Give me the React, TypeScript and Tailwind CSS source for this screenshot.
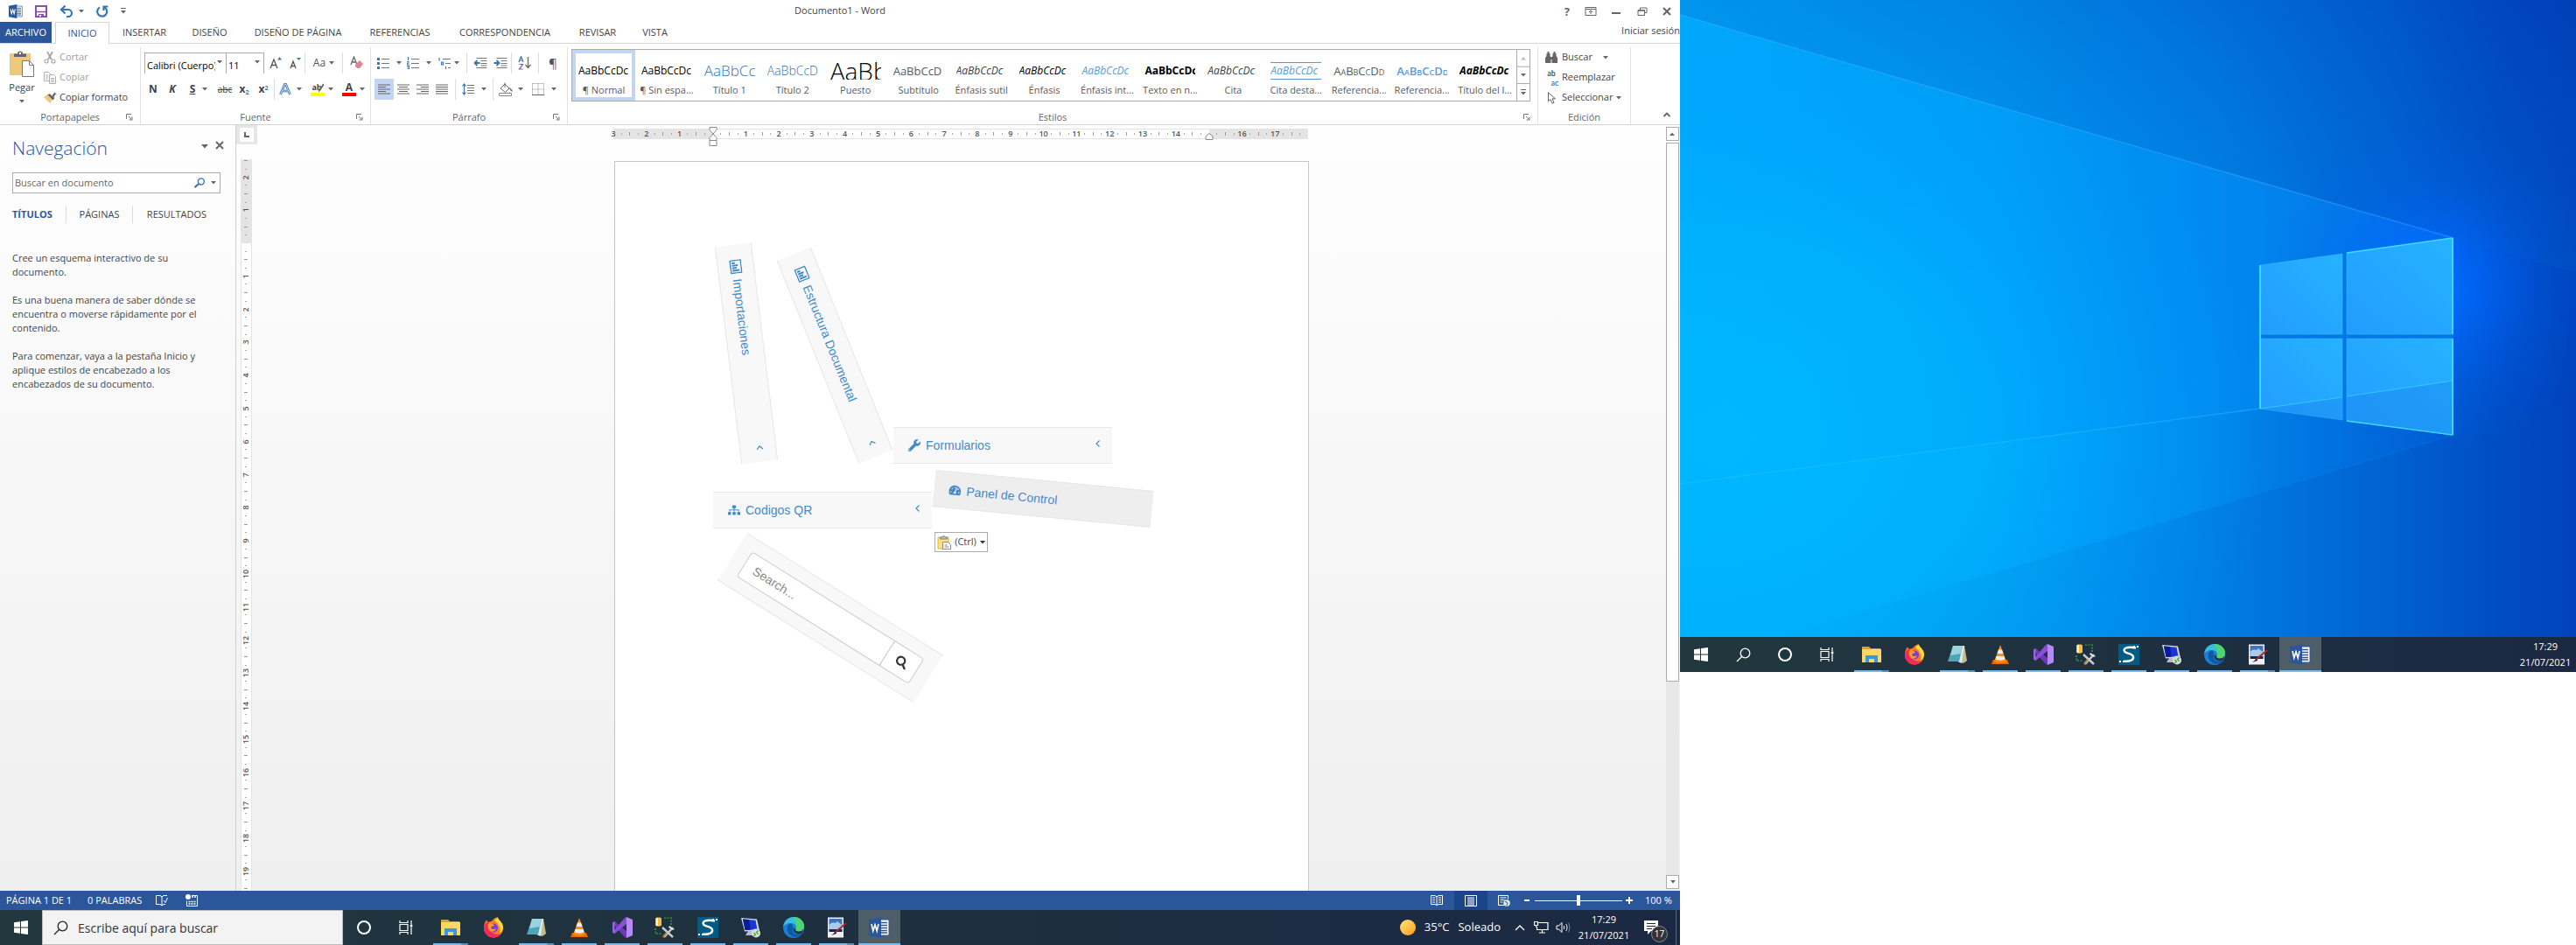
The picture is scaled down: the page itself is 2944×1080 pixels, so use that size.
import React from "react";
import { FaSearch, FaSitemap, FaTachometerAlt, FaWrench } from "react-icons/fa";

const UI = "font-['Open_Sans','Noto_Sans',sans-serif]";

/* ---------- shared bits ---------- */

function Caret({ className = "text-[#666]" }: { className?: string }) {
  return (
    <svg viewBox="0 0 6 4" className={`h-1 w-1.5 shrink-0 ${className}`} fill="currentColor" aria-hidden="true">
      <path d="M0 0h6L3 3.6z" />
    </svg>
  );
}

function Sep() {
  return <span className="h-6 w-px shrink-0 bg-[#dcdcdc]" />;
}

function Tool({ label, className = "", children }: { label: string; className?: string; children: React.ReactNode }) {
  return (
    <button type="button" aria-label={label} className={`flex h-6 shrink-0 items-center justify-center gap-1 ${className}`}>
      {children}
    </button>
  );
}

function Svg({ box = "0 0 16 16", className = "size-4", children }: { box?: string; className?: string; children: React.ReactNode }) {
  return (
    <svg viewBox={box} className={`shrink-0 ${className}`} fill="none" aria-hidden="true">
      {children}
    </svg>
  );
}

/* ---------- title bar ---------- */

function WordGlyph({ className = "size-4" }: { className?: string }) {
  return (
    <Svg box="0 0 24 24" className={className}>
      <path d="M12 3h11v18H12z" fill="#fff" stroke="#2b579a" strokeWidth="1" />
      <path d="M14 6.5h7M14 9.5h7M14 12.5h7M14 15.5h7M14 18h7" stroke="#2b579a" strokeWidth="1.4" />
      <path d="M0 2.8 14 0v24L0 21.2z" fill="#2b579a" />
      <path d="m3 8 1.8 8L7 9l2.2 7L11 8" stroke="#fff" strokeWidth="1.6" />
    </Svg>
  );
}

function TitleBar() {
  return (
    <header className="grid h-[25px] shrink-0 grid-cols-3 items-center text-[#444]">
      <div className="flex items-center pl-2.5">
        <WordGlyph />
        <button type="button" aria-label="Guardar" className="ml-3.5">
          <Svg box="0 0 14 14" className="size-3.5">
            <path d="M1 1h12v12H1z" stroke="#8a4fae" strokeWidth="2" />
            <path d="M2 7.5h10" stroke="#8a4fae" strokeWidth="1.5" />
            <path d="M4 10h6v4H4z" fill="#8a4fae" />
            <path d="M5 11h2v2H5z" fill="#fff" />
          </Svg>
        </button>
        <button type="button" aria-label="Deshacer" className="ml-3.5 flex items-center gap-1.5">
          <Svg box="0 0 16 14" className="h-3.5 w-4">
            <path d="M2 5h8a4 4 0 0 1 0 8H8" stroke="#3a76b4" strokeWidth="2.2" />
            <path d="M6.5 0.500 2 5l4.500 4.500" stroke="#3a76b4" strokeWidth="2.200" />
          </Svg>
          <Caret />
        </button>
        <button type="button" aria-label="Rehacer" className="ml-3.5">
          <Svg box="0 0 14 14" className="size-3.5">
            <path d="M9 2.200A5.500 5.500 0 1 1 4 2.400" stroke="#3a76b4" strokeWidth="2.200" />
            <path d="M8.500 6V1.500H13.500" stroke="#3a76b4" strokeWidth="2.200" />
          </Svg>
        </button>
        <button type="button" aria-label="Personalizar" className="ml-3.5 flex flex-col items-center gap-0.5">
          <span className="h-px w-1.5 bg-[#666]" />
          <Caret />
        </button>
      </div>
      <h1 className="text-center text-[11px]">Documento1 - Word</h1>
      <div className="flex items-center justify-end gap-[17px] pr-2.5 text-[#666]">
        <button type="button" aria-label="Ayuda" className="text-[13px] leading-4 font-bold">?</button>
        <button type="button" aria-label="Opciones de presentación">
          <Svg box="0 0 13 10" className="h-2.5 w-3.5">
            <path d="M.5.5h12v9H.5zM.5 2.500h12M6.500 8V4.500M4.500 6l2-2 2 2" stroke="#666" />
          </Svg>
        </button>
        <button type="button" aria-label="Minimizar" className="flex h-4 w-3 items-center">
          <span className="mt-1 h-0.5 w-2.5 bg-[#666]" />
        </button>
        <button type="button" aria-label="Restaurar">
          <Svg box="0 0 11 10" className="h-2.5 w-3">
            <path d="M3 3V1h7.500v5.500H8M.5 3.500h7.500v6H.5z" stroke="#666" />
            <path d="M.5 4h7.500" stroke="#666" strokeWidth="1.500" />
          </Svg>
        </button>
        <button type="button" aria-label="Cerrar">
          <Svg box="0 0 10 10" className="size-2.5">
            <path d="m1 1 8 8M9 1 1 9" stroke="#666" strokeWidth="2" />
          </Svg>
        </button>
      </div>
    </header>
  );
}

const tabs = [
  ["INSERTAR", "w-20"],
  ["DISEÑO", "w-[69px]"],
  ["DISEÑO DE PÁGINA", "w-[133px]"],
  ["REFERENCIAS", "w-[100px]"],
  ["CORRESPONDENCIA", "w-[140px]"],
  ["REVISAR", "w-[72px]"],
  ["VISTA", "w-[59px]"],
];

function Tabs() {
  return (
    <nav className="flex h-[25px] shrink-0 border-b border-[#d4d4d4] text-[11px] text-[#444]">
      <button type="button" className="w-[59px] bg-[#2b579a] text-white">ARCHIVO</button>
      <button type="button" className="-mb-px ml-1 w-[62px] border border-b-0 border-[#d4d4d4] bg-white text-[#2b579a]">INICIO</button>
      {tabs.map(([t, w]) => (
        <button type="button" key={t} className={`whitespace-nowrap ${w}`}>{t}</button>
      ))}
      <button type="button" className="ml-auto self-start pt-0.5 text-[11px]">Iniciar sesión</button>
    </nav>
  );
}

/* ---------- ribbon ---------- */

function Launcher() {
  return (
    <Svg box="0 0 8 8" className="size-2">
      <path d="M.5 6V.5H6M3 3l3.500 3.500M7 3.500V7H3.500" stroke="#777" />
    </Svg>
  );
}

function Group({ title, launcher = true, className, children }: { title: string; launcher?: boolean; className: string; children: React.ReactNode }) {
  return (
    <section aria-label={title} className={`flex flex-col border-r border-[#e1e1e1] ${className}`}>
      <div className="min-h-0 flex-1">{children}</div>
      <div className="grid h-4 grid-cols-[16px_1fr_16px] items-center text-[11px] leading-4 text-[#666]">
        <span />
        <span className="text-center">{title}</span>
        {launcher && <button type="button" aria-label={`Opciones de ${title}`}><Launcher /></button>}
      </div>
    </section>
  );
}

function Lines({ d }: { d: string }) {
  return (
    <Svg box="0 0 14 12" className="h-3 w-3.5">
      <path d={d} stroke="#666" strokeWidth="1.200" />
    </Svg>
  );
}

function Clipboard() {
  return (
    <Group title="Portapapeles" className="w-[161px]">
      <div className="flex">
        <button type="button" className="flex w-[50px] flex-col items-center pt-1 text-[11px] text-[#444]">
          <Svg box="0 0 28 30" className="h-[30px] w-7">
            <path d="M0 3h24v25H0z" fill="#edc87e" />
            <path d="M5 7V3.500h4a3 3 0 0 1 6 0h4V7z" fill="#666" />
            <circle cx="12" cy="3" r="1.200" fill="#fff" />
            <path d="M14.500 11.500h8l5 5v13h-13z" fill="#fff" stroke="#777" />
            <path d="M22.500 11.500v5h5" stroke="#777" />
          </Svg>
          <span className="mt-1 leading-4">Pegar</span>
          <Caret className="mt-1.5 text-[#666]" />
        </button>
        <div className="flex flex-col text-[11px] text-[#444]">
          <button type="button" className="flex h-[23px] items-center gap-1 text-[#a0a0a0]">
            <Svg box="0 0 14 14" className="size-3.5">
              <path d="M4 0l5 9M10 0 5 9" stroke="#a6a6a6" strokeWidth="1.800" />
              <circle cx="3" cy="11" r="2" stroke="#a6a6a6" strokeWidth="1.200" />
              <circle cx="11" cy="11" r="2" stroke="#a6a6a6" strokeWidth="1.200" />
            </Svg>
            Cortar
          </button>
          <button type="button" className="flex h-[23px] items-center gap-1 text-[#a0a0a0]">
            <Svg box="0 0 14 14" className="size-3.5">
              <path d="M.5.5h5l2 2v8H.5zM2 4h3M2 6h3M2 8h3" stroke="#b0b0b0" />
              <path d="M6.500 3.500h5l2 2v8h-7z" fill="#fff" stroke="#b0b0b0" />
              <path d="M8 7.500h4M8 9.500h4M8 11.500h4" stroke="#b0b0b0" />
            </Svg>
            Copiar
          </button>
          <button type="button" className="flex h-[23px] items-center gap-1 whitespace-nowrap">
            <Svg box="0 0 14 14" className="size-3.5">
              <path d="M0 6l4-3 6 6-3 4z" fill="#edc87e" />
              <path d="M4.500 3.500 6.500 2l6 5-2 2.500z" fill="#666" />
              <path d="m9.500 4.500 3-4L14 2l-2.500 4z" fill="#666" />
            </Svg>
            Copiar formato
          </button>
        </div>
      </div>
    </Group>
  );
}

function Combo({ label, value, className }: { label: string; value: string; className: string }) {
  return (
    <label className={`relative block h-6 shrink-0 border border-[#ababab] ${className}`}>
      <span className="sr-only">{label}</span>
      <select defaultValue={value} className="h-full w-full appearance-none overflow-hidden bg-white pr-3 pl-0.5 text-[11px] text-black">
        <option>{value}</option>
      </select>
      <span className="pointer-events-none absolute top-2 right-1 flex"><Caret /></span>
    </label>
  );
}

function FontGroup() {
  return (
    <Group title="Fuente" className="w-[263px]">
      <div className="flex items-center pt-1.5 pl-1">
        <Combo label="Fuente" value="Calibri (Cuerpo)" className="w-[94px]" />
        <Combo label="Tamaño" value="11" className="-ml-px w-11" />
        <Tool label="Aumentar" className="w-[25px]">
          <Svg box="0 0 14 14" className="size-3.5">
            <path d="m1 13 4-10 4 10M2.500 9.500h5" stroke="#555" strokeWidth="1.300" />
            <path d="M9 3.500 11.500 0 14 3.500z" fill="#3a76b4" />
          </Svg>
        </Tool>
        <Tool label="Reducir" className="w-[21px]">
          <Svg box="0 0 14 14" className="size-3.5">
            <path d="m1 13 3-8 3 8M2 10.500h4" stroke="#555" strokeWidth="1.300" />
            <path d="M8 1h5l-2.500 3z" fill="#3a76b4" />
          </Svg>
        </Tool>
        <Sep />
        <Tool label="Cambiar mayúsculas" className="w-[42px] text-[12px] text-[#555]">Aa<Caret /></Tool>
        <Sep />
        <Tool label="Borrar formato" className="w-8">
          <Svg>
            <path d="m1 10 3.500-9L8 10M2.500 7h4" stroke="#666" strokeWidth="1.300" />
            <path d="m6 10 5-5 4 4-4 5H8.500L6 12z" fill="#e57f92" />
          </Svg>
        </Tool>
      </div>
      <div className="flex items-center pt-1.5 pl-1 text-[12px] text-[#444]">
        <Tool label="Negrita" className="w-5 font-bold">N</Tool>
        <Tool label="Cursiva" className="w-6 font-bold italic">K</Tool>
        <Tool label="Subrayado" className="w-9 gap-2 font-bold"><u>S</u><Caret /></Tool>
        <Tool label="Tachado" className="w-6 text-[10px]"><s>abc</s></Tool>
        <Tool label="Subíndice" className="w-5 font-bold"><span>x<sub className="text-[7px] text-[#3a76b4]">2</sub></span></Tool>
        <Tool label="Superíndice" className="w-6 font-bold"><span>x<sup className="text-[7px] text-[#3a76b4]">2</sup></span></Tool>
        <Sep />
        <Tool label="Efectos de texto" className="w-9 gap-1.5">
          <Svg box="0 0 14 14" className="size-3.5">
            <path d="m1.500 13 5-12h1l5 12M3.500 9h7" stroke="#a8c8e8" strokeWidth="3.400" />
            <path d="m1.500 13 5-12h1l5 12M3.500 9h7" stroke="#2f6cab" strokeWidth="2" />
            <path d="m1.500 13 5-12h1l5 12M3.500 9h7" stroke="#fff" strokeWidth=".8" />
          </Svg>
          <Caret />
        </Tool>
        <Tool label="Resaltado" className="w-9">
          <span className="flex flex-col items-center">
            <span className="flex h-3 items-center text-[9px] font-bold">
              ab
              <Svg box="0 0 6 10" className="-ml-1 h-2.5 w-1.5"><path d="M6 1 2 7 0 9.500" stroke="#666" strokeWidth="2" /></Svg>
            </span>
            <span className="h-1 w-4 bg-[#ffff00]" />
          </span>
          <Caret />
        </Tool>
        <Tool label="Color de fuente" className="w-9">
          <span className="flex flex-col items-center">
            <span className="h-3 text-[12px] leading-3 font-bold">A</span>
            <span className="h-1 w-4 bg-[#ff0000]" />
          </span>
          <Caret />
        </Tool>
      </div>
    </Group>
  );
}

function ListIcon({ kind }: { kind: "dot" | "num" | "multi" }) {
  return (
    <Svg box="0 0 14 14" className="size-3.5">
      {kind === "multi" ? (
        <>
          <path d="M5 2.500h9M8 7.500h6M11 12.500h3" stroke="#777" strokeWidth="1.200" />
          <path d="M1 1v3.500M3.500 6v3h2V6zM8.500 11v3" stroke="#3a76b4" strokeWidth="1.200" />
        </>
      ) : (
        <>
          <path d="M5 2.500h9M5 7.500h9M5 12.500h9" stroke="#777" strokeWidth="1.200" />
          {kind === "dot" ? (
            <path d="M0 1h3v3H0zM0 6h3v3H0zM0 11h3v3H0z" fill="#3a76b4" />
          ) : (
            <path d="M1.500 0v4M0 5.500h2v1.700H.5v1.800H3M0 10.500h2.500v3.500H0M.5 12.200h2" stroke="#3a76b4" />
          )}
        </>
      )}
    </Svg>
  );
}

function IndentIcon({ flip = false }: { flip?: boolean }) {
  return (
    <Svg box="0 0 15 12" className="h-3 w-4">
      <path d="M3 .5h12M8 3.500h7M8 6.500h7M8 9h7M3 11.500h12" stroke="#777" />
      <path d={flip ? "M0 6h5M3 3l3 3-3 3" : "M7 6H1M4 3 1 6l3 3"} stroke="#3a76b4" strokeWidth="1.800" />
    </Svg>
  );
}

function ParagraphGroup() {
  return (
    <Group title="Párrafo" className="w-[225px]">
      <div className="flex items-center pt-1.5 pl-1">
        <Tool label="Viñetas" className="w-[34px] gap-2"><ListIcon kind="dot" /><Caret /></Tool>
        <Tool label="Numeración" className="w-[34px] gap-2"><ListIcon kind="num" /><Caret /></Tool>
        <Tool label="Lista multinivel" className="w-[34px]"><ListIcon kind="multi" /><Caret /></Tool>
        <span className="w-1" />
        <Sep />
        <Tool label="Disminuir sangría" className="ml-1 w-[22px]"><IndentIcon /></Tool>
        <Tool label="Aumentar sangría" className="w-6"><IndentIcon flip /></Tool>
        <Sep />
        <Tool label="Ordenar" className="w-[30px]">
          <Svg>
            <path d="m1 7 2.500-6.500L6 7M2 5h3" stroke="#3a76b4" strokeWidth="1.200" />
            <path d="M1.500 9.500h4l-4 5.500h4" stroke="#8a4fae" strokeWidth="1.200" />
            <path d="M11.500 1v12M8.500 10l3 3.500 3-3.500" stroke="#666" strokeWidth="1.300" />
          </Svg>
        </Tool>
        <Sep />
        <Tool label="Mostrar todo" className="w-8 text-[15px] text-[#555]">¶</Tool>
      </div>
      <div className="flex items-center pt-1.5 pl-1">
        <Tool label="Izquierda" className="w-[22px] bg-[#c2d5f2]"><Lines d="M0 1h14M0 3.500h9M0 6h14M0 8.500h9M0 11h14" /></Tool>
        <Tool label="Centrar" className="w-[22px]"><Lines d="M0 1h14M2 3.500h10M0 6h14M2 8.500h10M0 11h14" /></Tool>
        <Tool label="Derecha" className="w-[22px]"><Lines d="M0 1h14M5 3.500h9M0 6h14M5 8.500h9M0 11h14" /></Tool>
        <Tool label="Justificar" className="w-[22px]"><Lines d="M0 1h14M0 3.500h14M0 6h14M0 8.500h14M0 11h14" /></Tool>
        <span className="w-1" />
        <Sep />
        <Tool label="Espaciado" className="w-[42px] gap-2">
          <Svg box="0 0 14 14" className="size-3.5">
            <path d="M6 2.500h8M6 5.500h8M6 8.500h8M6 11.500h8" stroke="#777" />
            <path d="M2.500 1v12M.5 3.500l2-2.500 2 2.500M.5 10.500l2 2.500 2-2.500" stroke="#3a76b4" strokeWidth="1.200" />
          </Svg>
          <Caret />
        </Tool>
        <Sep />
        <Tool label="Sombreado" className="w-10 gap-1.5">
          <Svg>
            <path d="m2 7 5-5 5 5-4.500 4.500zM7 6V.5" stroke="#666" />
            <path d="M12 5.500 15.500 9v2L13 9z" fill="#3a76b4" />
            <path d="M.5 12.500h14v3H.5z" fill="#fff" stroke="#888" />
          </Svg>
          <Caret />
        </Tool>
        <Tool label="Bordes" className="w-9 gap-2">
          <Svg box="0 0 14 14" className="size-3.5">
            <path d="M.5.5h13v13M.5.5v13M7 .5v13M.5 7h13" stroke="#888" strokeDasharray="1 1" />
            <path d="M0 13.500h14" stroke="#666" />
          </Svg>
          <Caret />
        </Tool>
      </div>
    </Group>
  );
}

const styles: [string, string, string][] = [
  ["¶ Normal", "AaBbCcDc", "text-[12px] text-black"],
  ["¶ Sin espa...", "AaBbCcDc", "text-[12px] text-black"],
  ["Título 1", "AaBbCc", "text-[17px] font-light text-[#2e74b5]"],
  ["Título 2", "AaBbCcD", "text-[14px] font-light text-[#2e74b5]"],
  ["Puesto", "AaBb", "text-[28px] font-light text-black"],
  ["Subtítulo", "AaBbCcD", "text-[13px] text-[#5a5a5a]"],
  ["Énfasis sutil", "AaBbCcDc", "text-[12px] italic text-[#404040]"],
  ["Énfasis", "AaBbCcDc", "text-[12px] italic text-black"],
  ["Énfasis int...", "AaBbCcDc", "text-[12px] italic text-[#5b9bd5]"],
  ["Texto en n...", "AaBbCcDc", "text-[12px] font-bold text-black"],
  ["Cita", "AaBbCcDc", "text-[12px] italic text-[#404040]"],
  ["Cita desta...", "AaBbCcDc", "text-[12px] border-y border-[#5b9bd5] italic text-[#5b9bd5]"],
  ["Referencia...", "AaBbCcDd", "text-[13px] text-[#5a5a5a] [font-variant:small-caps]"],
  ["Referencia...", "AaBbCcDd", "text-[13px] font-semibold text-[#5b9bd5] [font-variant:small-caps]"],
  ["Título del l...", "AaBbCcDc", "text-[12px] font-bold italic text-black"],
];

function StylesGroup() {
  return (
    <Group title="Estilos" className="min-w-0 flex-1">
      <div className="mt-0.5 mr-2 ml-1 flex h-[60px] border border-[#ababab]">
        {styles.map(([name, sample, cls], i) => (
          <button
            type="button"
            key={i}
            className={`flex min-w-0 flex-1 flex-col items-center justify-end gap-1 border-4 ${i === 0 ? "border-[#c2d5f2]" : "border-transparent"}`}
          >
            <span className={`flex h-5 w-[58px] items-center overflow-hidden leading-5 whitespace-nowrap ${cls}`}>{sample}</span>
            <span className="text-[11px] leading-4 whitespace-nowrap text-[#5a5a5a]">{name}</span>
          </button>
        ))}
        <div className="flex w-[15px] flex-col border-l border-[#ababab]">
          <button type="button" aria-label="Subir" className="flex flex-1 rotate-180 items-center justify-center border-t border-[#ababab]"><Caret className="text-[#bbb]" /></button>
          <button type="button" aria-label="Bajar" className="flex flex-1 items-center justify-center border-b border-[#ababab]"><Caret /></button>
          <button type="button" aria-label="Más" className="flex flex-1 flex-col items-center justify-center gap-0.5"><span className="h-px w-1.5 bg-[#666]" /><Caret /></button>
        </div>
      </div>
    </Group>
  );
}

function EditGroup() {
  return (
    <Group title="Edición" launcher={false} className="w-[106px]">
      <div className="flex flex-col pl-[7px] text-[11px] text-[#444]">
        <button type="button" className="flex h-[23px] items-center gap-1">
          <Svg box="0 0 15 14" className="h-3.5 w-4">
            <path d="M2 2h4v3l1 2v6H.5V7L2 5zM9 2h4v3l1.500 2v6H8V7l1-2zM3 0h2v2H3zM10 0h2v2h-2zM6.500 6h2v3h-2z" fill="#666" />
          </Svg>
          Buscar<Caret className="ml-2 text-[#666]" />
        </button>
        <button type="button" className="flex h-[23px] items-center gap-1">
          <span className="flex w-4 flex-col text-[8px] leading-[11px] font-semibold">
            <span>ab</span>
            <span className="text-right text-[#3a76b4]">ac</span>
          </span>
          Reemplazar
        </button>
        <button type="button" className="flex h-[23px] items-center gap-1 whitespace-nowrap">
          <Svg box="0 0 16 14" className="h-3.5 w-4">
            <path d="M4.500.8v10l2.500-2.300 2 4.700 2-.9-2-4.500h3.500z" fill="#fff" stroke="#666" />
          </Svg>
          Seleccionar<Caret />
        </button>
      </div>
    </Group>
  );
}

function Ribbon() {
  return (
    <div className="h-[93px] shrink-0 border-b border-[#d4d4d4]">
      <div className="flex h-[92px] pt-1">
        <Clipboard />
        <FontGroup />
        <ParagraphGroup />
        <StylesGroup />
        <EditGroup />
        <div className="flex w-14 items-end justify-end pr-2.5 pb-1">
          <button type="button" aria-label="Contraer la cinta">
            <Svg box="0 0 9 6" className="mb-1 h-1.5 w-2.5"><path d="m1 5 3.500-3.500L8 5" stroke="#666" strokeWidth="1.800" /></Svg>
          </button>
        </div>
      </div>
    </div>
  );
}

/* ---------- navigation pane ---------- */

function NavPane() {
  return (
    <aside className="w-[270px] shrink-0 border-r border-[#d0d0d0] pt-3 pr-[17px] pl-3.5 text-[#444]">
      <div className="flex items-start">
        <h2 className="flex-1 text-[21px] leading-7 font-light text-[#2b579a]">Navegación</h2>
        <button type="button" aria-label="Opciones del panel" className="mt-2.5 mr-2">
          <Svg box="0 0 8 5" className="h-[5px] w-2"><path d="M0 0h8L4 4.500z" fill="#666" /></Svg>
        </button>
        <button type="button" aria-label="Cerrar panel" className="mt-1.5 -mr-1">
          <Svg box="0 0 10 10" className="size-2.5"><path d="m1 1 8 8M9 1 1 9" stroke="#666" strokeWidth="2" /></Svg>
        </button>
      </div>
      <div className="mt-3.5 flex h-6 items-center border border-[#ababab] bg-white pr-1">
        <input aria-label="Buscar en documento" placeholder="Buscar en documento" className="min-w-0 flex-1 pl-0.5 text-[11px] outline-none placeholder:text-[#666]" />
        <Svg box="0 0 14 13" className="h-3 w-3.5">
          <circle cx="9" cy="4.800" r="3.800" stroke="#3a76b4" strokeWidth="1.500" />
          <path d="M6.200 7.600 1 12" stroke="#3a76b4" strokeWidth="2.400" />
        </Svg>
        <span className="w-1.5" />
        <Caret />
      </div>
      <div className="mt-3.5 flex h-5 items-center text-[11px]">
        <button type="button" className="w-[61px] text-left font-bold text-[#2b579a]">TÍTULOS</button>
        <span className="h-5 w-px bg-[#dcdcdc]" />
        <button type="button" className="w-[75px]">PÁGINAS</button>
        <span className="h-5 w-px bg-[#dcdcdc]" />
        <button type="button" className="w-[100px] shrink-0">RESULTADOS</button>
      </div>
      <div className="mt-8 space-y-4 text-[11px] leading-4">
        <p>Cree un esquema interactivo de su documento.</p>
        <p>Es una buena manera de saber dónde se encuentra o moverse rápidamente por el contenido.</p>
        <p>Para comenzar, vaya a la pestaña Inicio y aplique estilos de encabezado a los encabezados de su documento.</p>
      </div>
    </aside>
  );
}

/* ---------- rulers ---------- */

const hidden = [0, 15];

function HCell({ n }: { n: number }) {
  return (
    <div className="flex min-w-0 flex-1 items-center justify-between">
      <span className="flex w-0 justify-center text-[9px] leading-3 font-semibold text-[#555]">{hidden.includes(n) ? "" : Math.abs(n)}</span>
      <span className="h-0.5 w-px bg-[#aaa]" />
      <span className="h-1 w-px bg-[#999]" />
      <span className="h-0.5 w-px bg-[#aaa]" />
      <span className="w-0" />
    </div>
  );
}

function VCell({ n }: { n: number }) {
  return (
    <div className="flex min-h-0 flex-1 flex-col items-center justify-between">
      <span className="flex h-0 items-center">
        <span className="-rotate-90 text-[9px] leading-3 font-semibold text-[#555]">{n === 0 ? "" : Math.abs(n)}</span>
      </span>
      <span className="h-px w-0.5 bg-[#aaa]" />
      <span className="h-px w-1 bg-[#999]" />
      <span className="h-px w-0.5 bg-[#aaa]" />
      <span className="h-0" />
    </div>
  );
}

const range = (from: number, to: number) => Array.from({ length: to - from + 1 }, (_, i) => from + i);

function HRuler() {
  return (
    <div className="relative flex h-3 w-[794px]">
      <div className="flex flex-[3] bg-[#e4e4e4]">{range(-3, -1).map((n) => <HCell key={n} n={n} />)}</div>
      <div className="flex flex-[15] border-y border-[#e4e4e4] bg-white">{range(0, 14).map((n) => <HCell key={n} n={n} />)}</div>
      <div className="flex flex-[3] bg-[#e4e4e4]">{range(15, 17).map((n) => <HCell key={n} n={n} />)}</div>
      <svg viewBox="0 0 10 22" className="absolute -top-0.5 left-[109px] h-[22px] w-2.5" fill="#fff" stroke="#888" aria-hidden="true">
        <path d="M1 .5h8v3L5 8 1 3.500zM1 15.500v-3L5 8l4 4.500v3zM1 15.500h8v6H1z" />
      </svg>
      <svg viewBox="0 0 10 10" className="absolute top-1 right-[108px] h-2.5 w-2.5" fill="#fff" stroke="#888" aria-hidden="true">
        <path d="M1 8.500v-3.500L5 1.500 9 5v3.500z" />
      </svg>
    </div>
  );
}

/* ---------- document canvas ---------- */

function FramedBars() {
  return (
    <svg viewBox="0 0 16 14" className="h-3.5 w-4" fill="none" aria-hidden="true">
      <path d="M.8.800h14.400v12.200H.8z" stroke="#428bca" strokeWidth="1.400" />
      <path d="M3.800 7.500V11.200M6.600 4.500V11.200M9.400 6V11.200M12.200 3V11.200" stroke="#428bca" strokeWidth="2" />
    </svg>
  );
}

function MenuCard({ icon, text, arrow = true, className }: { icon: React.ReactNode; text: string; arrow?: boolean; className: string }) {
  return (
    <a href="#" className={`absolute flex h-[42px] w-[250px] items-center gap-1.5 border-y border-[#e7e7e7] pr-3.5 pl-[17px] font-['Liberation_Sans',Arial,sans-serif] text-[14px] text-[#428bca] ${className}`}>
      {icon}
      <span className="flex-1 whitespace-nowrap">{text}</span>
      {arrow && (
        <svg viewBox="0 0 5 8" className="mb-1 h-2 w-[5px]" fill="none" stroke="#428bca" strokeWidth="1.200" aria-hidden="true">
          <path d="M4.500.5 1 4l3.500 3.500" />
        </svg>
      )}
    </a>
  );
}

function Page() {
  return (
    <div className="relative h-full w-[794px] border border-b-0 border-[#c6c6c6] bg-white">
      <MenuCard icon={<FramedBars />} text="Importaciones" className="top-[198px] left-[25px] rotate-[83deg] bg-[#f8f8f8]" />
      <MenuCard icon={<FramedBars />} text="Estructura Documental" className="top-[200px] left-[126px] rotate-[68deg] bg-[#f8f8f8]" />
      <MenuCard icon={<FaWrench className="size-3.5" />} text="Formularios" className="top-[303px] left-[318px] bg-[#f8f8f8]" />
      <MenuCard icon={<FaSitemap className="size-3.5" />} text="Codigos QR" className="top-[377px] left-[112px] bg-[#f8f8f8]" />
      <MenuCard icon={<FaTachometerAlt className="size-3.5" />} text="Panel de Control" arrow={false} className="top-[364px] left-[364px] rotate-[5.5deg] bg-[#eee]" />
      <form className="absolute top-[489px] left-[114px] flex h-16 w-[264px] rotate-[32deg] items-center border-y border-[#e7e7e7] bg-[#f8f8f8] px-4">
        <input aria-label="Search" placeholder="Search..." className="h-[34px] min-w-0 flex-1 rounded-l border border-[#ccc] bg-white px-3 font-['Liberation_Sans',Arial,sans-serif] text-[14px] placeholder:text-[#888]" />
        <button type="button" aria-label="Buscar" className="-ml-px flex h-[34px] w-10 items-center justify-center rounded-r border border-[#ccc] bg-white">
          <FaSearch className="size-3.5 -rotate-[10deg] text-[#333]" />
        </button>
      </form>
      <button type="button" className="absolute top-[423px] left-[365px] flex h-[23px] w-[61px] items-center justify-center gap-1 border border-[#ababab] bg-white text-[11px] text-[#444]">
        <Svg>
          <path d="M1 2h12v13H1z" fill="#ffe27a" stroke="#d9b740" />
          <path d="M3.500 4V2H6a1.500 1.500 0 0 1 3 0h2.500v2z" fill="#bbb" stroke="#888" />
          <path d="M6.500 7.500h6l3 3v5h-9z" fill="#fff" stroke="#888" />
          <path d="M8.500 11h3M8.500 13h5" stroke="#888" />
        </Svg>
        (Ctrl)<Caret className="text-[#333]" />
      </button>
    </div>
  );
}

function DocumentArea() {
  return (
    <main className="grid min-h-0 min-w-0 flex-1 grid-cols-[24px_1fr_16px] grid-rows-[22px_minmax(0,1fr)]">
      <div className="flex items-center justify-center bg-[#e6e6e6]">
        <div className="flex size-4 items-center justify-center bg-white">
          <span className="size-1.5 border-b-2 border-l-2 border-[#666]" />
        </div>
      </div>
      <div className="flex justify-center pt-1 pr-0.5"><HRuler /></div>
      <div className="row-span-2 flex flex-col pt-0.5 pr-px">
        <button type="button" aria-label="Desplazar arriba" className="flex h-4 shrink-0 rotate-180 items-center justify-center border border-[#ababab] bg-white"><Caret /></button>
        <div className="mt-0.5 flex min-h-0 flex-1 flex-col bg-[#e8e8e8] pb-1"><div className="h-[74%] border border-[#ababab] bg-white" /></div>
        <button type="button" aria-label="Desplazar abajo" className="mb-0.5 flex h-4 shrink-0 items-center justify-center border border-[#ababab] bg-white"><Caret /></button>
      </div>
      <div className="flex min-h-0 flex-col items-center overflow-hidden pt-[17px] pr-0.5">
        <div className="flex h-24 w-[13px] shrink-0 flex-col justify-end overflow-hidden bg-[#e4e4e4]">
          <div className="flex h-[113px] shrink-0 flex-col">{range(-3, -1).map((n) => <VCell key={n} n={n} />)}</div>
        </div>
        <div className="flex h-[756px] w-[13px] shrink-0 flex-col border-x border-[#e4e4e4] bg-white">{range(0, 19).map((n) => <VCell key={n} n={n} />)}</div>
      </div>
      <div className="flex min-h-0 justify-center overflow-hidden pt-[19px]"><Page /></div>
    </main>
  );
}

/* ---------- status bar ---------- */

function StatusBar() {
  return (
    <footer className="flex h-[22px] shrink-0 items-center bg-[#2b579a] text-[11px] text-white">
      <span className="w-[92px] pl-[7px] whitespace-nowrap">PÁGINA 1 DE 1</span>
      <span className="pl-2">0 PALABRAS</span>
      <button type="button" aria-label="Revisión" className="ml-4">
        <Svg box="0 0 14 14" className="size-3.5">
          <path d="M7 3v10L5 11.500H.5V1.500H5zM7 3l2-1.500h4M7 13l2-1.500h2M9 7l2 2.500L13.500 4" stroke="#fff" />
        </Svg>
      </button>
      <button type="button" aria-label="Macro" className="ml-5">
        <Svg box="0 0 14 14" className="size-3.5">
          <circle cx="3" cy="3" r="3" fill="#fff" />
          <path d="M7 1.500h6.500v12H1.500V7.500" stroke="#fff" />
          <path d="M7 3h6M3.500 8.500h8M3.500 11h8" stroke="#fff" strokeWidth="1.500" strokeDasharray="2 1" />
        </Svg>
      </button>
      <div className="ml-auto flex h-full items-center">
        <button type="button" aria-label="Modo de lectura" className="mr-[13px]">
          <Svg box="0 0 14 12" className="h-3 w-3.5">
            <path d="M7 2v9.500L5 10.500H.5v-10H5zM7 2l2-1.500h4.500v10H9l-2 1M2 3h3M2 5.500h3M2 8h3M9 3h3M9 5.500h3M9 8h3" stroke="#fff" />
          </Svg>
        </button>
        <button type="button" aria-label="Diseño de impresión" className="flex h-full w-[38px] items-center justify-center bg-[#1c4587]">
          <Svg box="0 0 14 13" className="h-[13px] w-3.5">
            <path d="M.5.5h13v12H.5zM3 3h8M3 5h8M3 7h8M3 9h8M3 11h8" stroke="#fff" />
          </Svg>
        </button>
        <button type="button" aria-label="Diseño web" className="ml-3">
          <Svg box="0 0 14 13" className="h-[13px] w-3.5">
            <path d="M7 11.500H.5V.5h11v4M2.500 3h7M2.500 5.500h5M2.500 8h3" stroke="#fff" />
            <circle cx="10" cy="9" r="3.800" fill="#dfe8f5" />
            <path d="M8 7.500l2 .5 1 2-1.500 2" stroke="#2b579a" />
          </Svg>
        </button>
        <button type="button" aria-label="Alejar" className="ml-4 flex h-4 w-2 items-center"><span className="h-0.5 w-1.5 bg-white" /></button>
        <label className="relative ml-1 flex h-3 w-[100px] items-center">
          <span className="sr-only">Zoom</span>
          <input type="range" defaultValue={50} className="absolute inset-0 m-0 h-3 w-full appearance-none opacity-0" />
          <span className="h-px w-full bg-white" />
          <span className="absolute left-1/2 h-3 w-1 -translate-x-1/2 bg-white" />
        </label>
        <button type="button" aria-label="Acercar" className="ml-1">
          <Svg box="0 0 8 8" className="size-2"><path d="M4 0v8M0 4h8" stroke="#fff" strokeWidth="2" /></Svg>
        </button>
        <span className="w-[54px] pl-3.5 whitespace-nowrap">100 %</span>
      </div>
    </footer>
  );
}

/* ---------- taskbar ---------- */

const art: Record<string, React.ReactNode> = {
  Explorador: (
    <>
      <path d="M1 3h8l2 2h11v15H1z" fill="#e0a11b" />
      <path d="M1 6h22v15H1z" fill="#fcd668" />
      <path d="M5 13h14v8h-4v-4H9v4H5z" fill="#3c96dc" />
    </>
  ),
  Firefox: (
    <>
      <path d="M12 2.500c3-2.500 4-2 5-2 0 3 6 5 6 12A11 11 0 0 1 1 12.500C1 8 2.500 5.500 4 3.500l2 2.500c2-1 4-.5 6-3.500z" fill="#ff7a1a" />
      <path d="M1 12.500a11 11 0 0 0 20 6c-4 3-11 1-12-4-2-4-1-6-4-9-2 2-4 4-4 7z" fill="#f5285e" />
      <path d="M13 4c3-3 3-3 4-3.500 0 3 6 5 6 12-1 4-2 5-4 6 2-5-1-11-6-14.500z" fill="#ffd93c" />
      <circle cx="12" cy="12.500" r="5" fill="#7a3ddb" />
      <path d="M6 8c3-1 5 0 7 1-1 2-3 1-4 3 1 3 4 2 6 1-1 4-6 5-8 2-1-2-2-4-1-7z" fill="#ff9a26" />
    </>
  ),
  Notas: (
    <>
      <path d="M7 2h13l3 17-4 3-5-2z" fill="#c7b98a" />
      <path d="M7 2h13l-3 20-5-2z" fill="#dfe9ea" />
      <path d="M7 2h11l-4 18H1z" fill="#4fa5b8" />
      <path d="M7 2h11l-2 9-12 2z" fill="#9ad4e0" />
    </>
  ),
  VLC: (
    <>
      <path d="M4 18h16l2 5H2z" fill="#e66a00" />
      <path d="m12 1 7 19c-4 2-10 2-14 0z" fill="#ff8a12" />
      <path d="m10 6.500 4 0 1.500 4c-2 1-5 1-7 0zM7.500 14h9l1 3.500c-3 1.500-8 1.500-11 0z" fill="#eee" />
    </>
  ),
  "Visual Studio": (
    <>
      <path d="m17 0 7 3v18l-7 3z" fill="#b58af2" />
      <path d="M1 6.500 3.500 5 17 16V24L15 23 1.500 8z" fill="#7038b8" />
      <path d="M17 0v8L3.500 19 1 17.500 15 1z" fill="#8a4fd6" />
      <path d="M1 6.500 3.500 5v14L1 17.500z" fill="#9a63e0" />
    </>
  ),
  "SQL Server": (
    <>
      <path d="M1 1.500c0-1.500 7-1.500 7 0v8c0 1.500-7 1.500-7 0z" fill="#f0c040" />
      <path d="M3 1v9" stroke="#fff3b8" strokeWidth="2" />
      <path d="M11 1h8v8M1 13v6h7" stroke="#52b043" strokeWidth="1.200" strokeDasharray="2 1.500" fill="none" />
      <path d="m9 12 12 11M21 12 11 23" stroke="#c8ccd0" strokeWidth="2.400" />
      <path d="m14 18-4 5" stroke="#b58a4a" strokeWidth="2.400" />
      <path d="m17 10 6 4-2 1-5-3z" fill="#dde2e6" />
    </>
  ),
  Sage: (
    <>
      <path d="M0 0h24v24H0z" fill="#005c84" />
      <path d="M20 4.500C10 2.500 5 5 7 8.500c2 3 9 2 10 6 1 4-5 6-11 5" stroke="#fff" strokeWidth="2.400" fill="none" />
      <path d="M17 3h2M21 3h2M1 20h2M5 20h2" stroke="#fff" strokeWidth="1.800" />
    </>
  ),
  "Escritorio remoto": (
    <>
      <path d="M1 1 19 2.500l3 13-17 1z" fill="#d6dae2" />
      <path d="m3 2.500 14.500 1.200 2 10.500L5.500 15z" fill="#1836d8" />
      <path d="m3 2.500 7 .600 1.500 11.600-6 .300z" fill="#0a1a9a" />
      <path d="m9 16 5 0 1 5H6z" fill="#b7bcc6" />
      <circle cx="18" cy="18.500" r="5" fill="#d9e0d6" />
      <path d="m15.500 18 2 2-2 2M20.500 15.500l-2 2 2 2" stroke="#3a9a3a" strokeWidth="1.200" fill="none" />
    </>
  ),
  Edge: (
    <>
      <circle cx="12" cy="12" r="12" fill="#1b7fd4" />
      <path d="M0 12C1 4 6 0 12 0c7 0 12 5 12 10.500 0 4-3 6-6.500 6-3 0-4-1.500-3-3 1.500-3-1-6.500-5.500-6.500S1 8.500 0 12z" fill="#37bfe0" />
      <path d="M12 0c7 0 12 5 12 10.500 0 4-3 6-6.500 6-3 0-4-1.500-3-3C17 9 14 4 12 0z" fill="#4fd66b" />
      <path d="M9 7.500c-5 0-6 9-1 13 5 4 12 2 14-1.500-6 3-13-1-11-6 1-2-1-5-2-5.500z" fill="#0c59a4" />
      <path d="M14.500 13.500c-1 1.500 0 3 3 3 2 0 4-.6 5.200-2l-1 4C17 21 11 18 11.500 13z" fill="#21343e" />
    </>
  ),
  Paint: (
    <>
      <path d="M2 .5h18v23H2z" fill="#f1f1f1" />
      <path d="M3.500 2h15v12h-15z" fill="#3d76bd" />
      <path d="M3.500 9c4-5 7 0 9-4l6 4v5h-15z" fill="#a9cbe8" />
      <path d="M3.500 14h15v3h-15z" fill="#142a52" />
      <path d="M23 7 10 18" stroke="#b32025" strokeWidth="2" />
      <path d="m11 17-5 4 6-2z" fill="#222" />
    </>
  ),
};

const apps: [string, "none" | "one" | "many"][] = [
  ["Explorador", "many"],
  ["Firefox", "none"],
  ["Notas", "many"],
  ["VLC", "one"],
  ["Visual Studio", "one"],
  ["SQL Server", "one"],
  ["Sage", "one"],
  ["Escritorio remoto", "one"],
  ["Edge", "one"],
  ["Paint", "many"],
];

function Magnifier({ className }: { className: string }) {
  return (
    <Svg box="0 0 17 17" className={`size-[17px] ${className}`}>
      <circle cx="10.500" cy="6.500" r="5.300" stroke="currentColor" strokeWidth="1.300" />
      <path d="M6.800 10.300 1 16" stroke="currentColor" strokeWidth="1.300" />
    </Svg>
  );
}

function TaskApps() {
  return (
    <>
      <button type="button" aria-label="Cortana" className="flex h-10 w-12 items-center justify-center">
        <span className="size-4 rounded-full border-2 border-white" />
      </button>
      <button type="button" aria-label="Vista de tareas" className="flex h-10 w-12 items-center justify-center">
        <Svg className="size-4">
          <path d="M1 0v2.500h9V0M1 16v-2.500h9V16M1 4.500h9v7H1zM14 0v4M14 8v8" stroke="#fff" strokeWidth="1.200" />
          <path d="M12.800 4.500h2.500v3h-2.500z" fill="#fff" />
        </Svg>
      </button>
      <div className="ml-[3px] flex gap-px">
        {apps.map(([name, state]) => (
          <button type="button" key={name} aria-label={name} className="flex h-10 w-12 flex-col items-center justify-between">
            <Svg box="0 0 24 24" className="mt-2 size-6">{art[name]}</Svg>
            <span className="flex h-0.5 w-10">
              {state !== "none" && <span className="flex-1 bg-[#76b9ed]" />}
              {state === "many" && <span className="w-2 bg-[#5b8fb5]" />}
            </span>
          </button>
        ))}
        <button type="button" aria-label="Word" className="flex h-10 w-12 flex-col items-center justify-between bg-[#4d5e69]">
          <WordGlyph className="mt-2 size-6" />
          <span className="h-0.5 w-full bg-[#76b9ed]" />
        </button>
      </div>
    </>
  );
}

function StartButton() {
  return (
    <button type="button" aria-label="Inicio" className="flex h-10 w-12 items-center justify-center">
      <Svg>
        <path d="m0 2.200 7-1v6.300H0zM8 1.100 16 0v7.500H8zM0 8.500h7v6.300l-7-1zM8 8.500h8V16l-8-1.100z" fill="#fff" />
      </Svg>
    </button>
  );
}

function Clock({ className }: { className: string }) {
  return (
    <div className={`flex flex-col text-center text-[11px] leading-[18px] text-white ${className}`}>
      <span>17:29</span>
      <span>21/07/2021</span>
    </div>
  );
}

function MainTaskbar() {
  return (
    <div className="flex h-10 shrink-0 items-center bg-linear-to-r from-[#21383e] to-[#1b2842] text-white">
      <StartButton />
      <label className="flex h-full w-[344px] items-center border border-[#bdbdbd] bg-[#f3f3f3] pl-3 text-[#222]">
        <Magnifier className="text-[#222]" />
        <input aria-label="Buscar en Windows" placeholder="Escribe aquí para buscar" className="min-w-0 flex-1 pl-[11px] text-[14px] outline-none placeholder:text-[#333]" />
      </label>
      <TaskApps />
      <div className="ml-auto flex h-full items-center">
        <span className="size-[18px] rounded-full bg-linear-to-br from-[#ffe873] to-[#ff9a0a]" />
        <span className="ml-2.5 text-[13px]">35°C</span>
        <span className="ml-2.5 text-[13px]">Soleado</span>
        <Svg box="0 0 12 7" className="ml-4 h-[7px] w-3"><path d="m1 6 5-5 5 5" stroke="#fff" strokeWidth="1.300" /></Svg>
        <Svg box="0 0 17 14" className="ml-2.5 h-3.5 w-[17px]">
          <path d="M5 1.500h11v8H3.500V6M9.500 9.500V13M6 13h7M.5.5h4v4h-4zM2.500 4.500v2" stroke="#fff" strokeWidth="1.200" />
        </Svg>
        <Svg box="0 0 17 14" className="ml-2 h-3.5 w-[17px]">
          <path d="M1 5h2.500L7 1.500v11L3.500 9H1zM9 5c1 1 1 3 0 4M11.500 3c2 2 2 6 0 8" stroke="#fff" />
          <path d="M14 1.500c2.500 3 2.500 8 0 11" stroke="#7b8596" />
        </Svg>
        <Clock className="w-[76px]" />
        <button type="button" aria-label="Notificaciones" className="relative ml-2 h-8 w-9">
          <Svg box="0 0 16 16" className="absolute top-2 left-0 size-4">
            <path d="M0 0h16v12H8l-4 4v-4H0z" fill="#fff" />
            <path d="M3 3.500h10M3 6.500h10M3 9.500h6" stroke="#1b2842" />
          </Svg>
          <span className="absolute top-3.5 left-2 flex size-[19px] items-center justify-center rounded-full border border-[#888] bg-[#30333a] text-[10px]">17</span>
        </button>
        <span className="mr-1 h-full w-px bg-[#5c6677]" />
      </div>
    </div>
  );
}

function SecondTaskbar() {
  return (
    <div className="flex h-10 shrink-0 items-center bg-linear-to-r from-[#21383e] to-[#1b2842]">
      <StartButton />
      <button type="button" aria-label="Buscar" className="flex h-10 w-12 items-center justify-center text-white"><Magnifier className="text-white" /></button>
      <TaskApps />
      <Clock className="ml-auto w-[70px]" />
    </div>
  );
}

/* ---------- wallpaper ---------- */

function Wallpaper() {
  return (
    <svg viewBox="0 0 1024 728" preserveAspectRatio="none" className="block min-h-0 w-full flex-1" aria-hidden="true">
      <defs>
        <linearGradient id="base" x1="0" y1="0" x2="1" y2="0">
          <stop offset="0" stopColor="#00a8fb" />
          <stop offset=".35" stopColor="#009ef5" />
          <stop offset=".6" stopColor="#0086ea" />
          <stop offset=".8" stopColor="#0066d8" />
          <stop offset=".92" stopColor="#004cc6" />
          <stop offset="1" stopColor="#0043bc" />
        </linearGradient>
        <radialGradient id="cyan" gradientUnits="userSpaceOnUse" cx="0" cy="0" r="1" gradientTransform="translate(60 500) scale(620 480)">
          <stop offset="0" stopColor="#00b9ff" />
          <stop offset=".45" stopColor="#00b4ff" stopOpacity=".8" />
          <stop offset="1" stopColor="#00a0ff" stopOpacity="0" />
        </radialGradient>
        <radialGradient id="glow" gradientUnits="userSpaceOnUse" cx="860" cy="330" r="190">
          <stop offset="0" stopColor="#0070ff" />
          <stop offset=".3" stopColor="#0068ff" stopOpacity=".65" />
          <stop offset=".65" stopColor="#0060f0" stopOpacity=".22" />
          <stop offset="1" stopColor="#0058e0" stopOpacity="0" />
        </radialGradient>
        <linearGradient id="upper" x1="0" y1="1" x2="1" y2="0">
          <stop offset="0" stopColor="#0080e0" stopOpacity="0" />
          <stop offset=".4" stopColor="#0064cc" stopOpacity=".22" />
          <stop offset="1" stopColor="#003cb0" stopOpacity=".5" />
        </linearGradient>
        <linearGradient id="beam" x1="0" y1="0" x2="1" y2="0">
          <stop offset="0" stopColor="#00a8ff" stopOpacity="0" />
          <stop offset=".6" stopColor="#0094fc" stopOpacity=".25" />
          <stop offset="1" stopColor="#0a88ff" stopOpacity=".5" />
        </linearGradient>
        <linearGradient id="pane" x1="0" y1="1" x2="1" y2="0">
          <stop offset="0" stopColor="#229cff" />
          <stop offset="1" stopColor="#26b2ff" />
        </linearGradient>
        <linearGradient id="lower" x1="0" y1="0" x2="1" y2="0">
          <stop offset="0" stopColor="#00a0e8" stopOpacity=".05" />
          <stop offset=".6" stopColor="#0068d0" stopOpacity=".35" />
          <stop offset="1" stopColor="#0044b8" stopOpacity=".5" />
        </linearGradient>
      </defs>
      <path d="M0 0h1024v728H0z" fill="url(#base)" />
      <path d="M0 0h1024v728H0z" fill="url(#cyan)" />
      <path d="M0 0h1024v312L884 272 0 17z" fill="url(#upper)" />
      <path d="M113 728 884 497l140-42v273z" fill="url(#lower)" />
      <path d="M0 17 884 272v195H662L0 553z" fill="url(#beam)" />
      <path d="M0 0h1024v728H0z" fill="url(#glow)" />
      <path d="M0 17 884 272" stroke="#4cb8ff" strokeOpacity=".35" strokeWidth="1.500" />
      <path d="M0 553 662 467" stroke="#2cc4ff" strokeOpacity=".4" strokeWidth="1.500" />
      <path d="M113 728 884 497" stroke="#1ba4ff" strokeOpacity=".2" />
      <path d="M662 302.500 884 271.500v226L662 467z" fill="#0078e8" />
      <g fill="url(#pane)" stroke="#4cd0ff" strokeOpacity=".4">
        <path d="M663 303 757 290v92h-94z" />
        <path d="M762 289 883 272v110H762z" />
        <path d="M663 387h94v93l-94-13z" />
        <path d="M762 387h121v110l-121-16z" />
      </g>
      <path d="m663 467 94-13v26zM762 453l121-18v62l-121-16z" fill="#1a84ea" fillOpacity=".4" />
      <path d="m663 467 94-13M762 453l121-18" stroke="#30c8ff" strokeWidth="1.200" />
      <path d="M663 467V303M883 272v110M883 387v110" stroke="#3cecff" strokeWidth="1.600" />
      <path d="m762 289 121-17M883 497l-121-16" stroke="#3cdcff" strokeWidth="1.300" />
    </svg>
  );
}

export default function App() {
  return (
    <div className={`grid min-h-screen grid-cols-[1920fr_1024fr] items-start bg-white ${UI}`}>
      <div className="flex h-screen min-w-0 flex-col overflow-hidden">
        <TitleBar />
        <Tabs />
        <Ribbon />
        <div className="flex min-h-0 flex-1 bg-linear-to-b from-[#fefefe] to-[#efefef]">
          <NavPane />
          <DocumentArea />
        </div>
        <StatusBar />
        <MainTaskbar />
      </div>
      <div className="flex aspect-[4/3] min-w-0 flex-col overflow-hidden">
        <Wallpaper />
        <SecondTaskbar />
      </div>
    </div>
  );
}
